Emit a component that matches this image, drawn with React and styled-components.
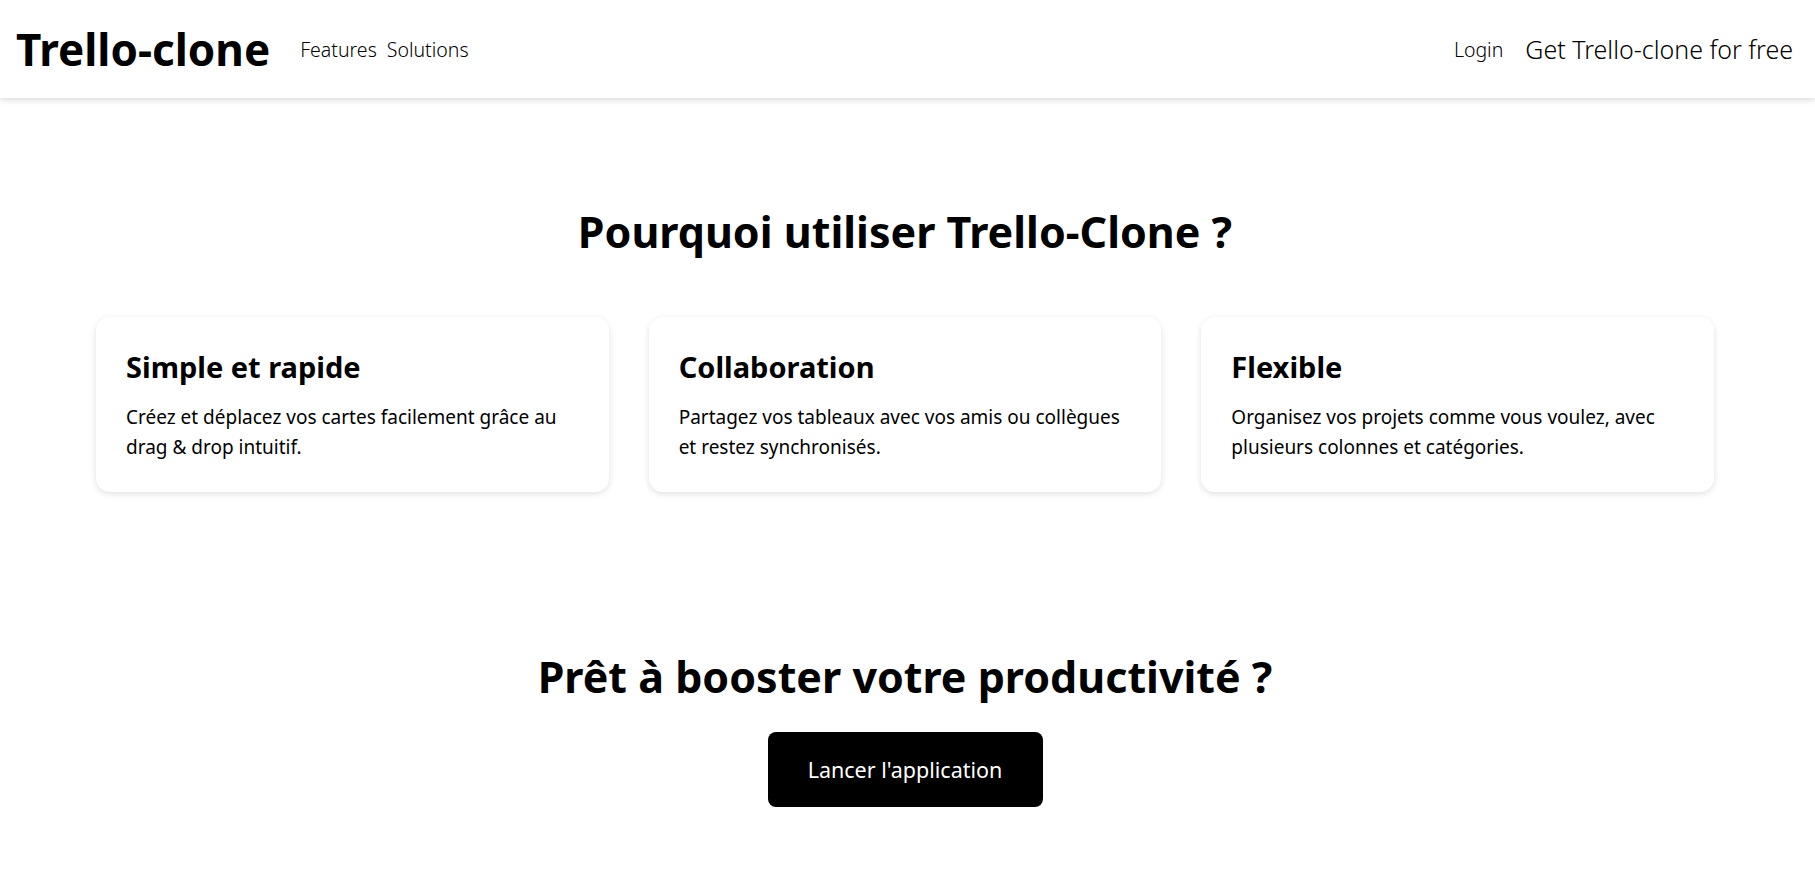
import React from "react";
import styled, { createGlobalStyle } from "styled-components";

const features = [
  {
    title: "Simple et rapide",
    text: "Créez et déplacez vos cartes facilement grâce au drag & drop intuitif.",
  },
  {
    title: "Collaboration",
    text: "Partagez vos tableaux avec vos amis ou collègues et restez synchronisés.",
  },
  {
    title: "Flexible",
    text: "Organisez vos projets comme vous voulez, avec plusieurs colonnes et catégories.",
  },
];

const App = () => (
  <>
    <GlobalStyle />
    <Header>
      <Left>
        <Logo>Trello-clone</Logo>
        <Nav>
          <NavLink>Features</NavLink>
          <NavLink>Solutions</NavLink>
        </Nav>
      </Left>
      <Right>
        <NavLink>Login</NavLink>
        <Cta>Get Trello-clone for free</Cta>
      </Right>
    </Header>

    <Main>
      <Features>
        <Title>Pourquoi utiliser Trello-Clone ?</Title>
        <Grid>
          {features.map((f) => (
            <Card key={f.title}>
              <CardTitle>{f.title}</CardTitle>
              <CardText>{f.text}</CardText>
            </Card>
          ))}
        </Grid>
      </Features>

      <Launch>
        <Title>Prêt à booster votre productivité ?</Title>
        <Button>Lancer l'application</Button>
      </Launch>
    </Main>
  </>
);

const GlobalStyle = createGlobalStyle`
  body {
    margin: 0;
    background: #fff;
    color: #000;
    font-family: "Noto Sans", "DejaVu Sans", sans-serif;
  }
  * {
    box-sizing: border-box;
  }
`;

const Header = styled.header`
  display: flex;
  justify-content: space-between;
  align-items: center;
  height: 98px;
  padding: 0 22px 0 16px;
  background: #fff;
  box-shadow: 0 2px 6px rgba(0, 0, 0, 0.15);
`;

const Left = styled.div`
  display: flex;
  align-items: center;
  gap: 30px;
`;

const Logo = styled.div`
  font-size: 44px;
  font-weight: 700;
`;

const Nav = styled.nav`
  display: flex;
  gap: 10px;
`;

const NavLink = styled.a`
  font-size: 19.5px;
  font-weight: 300;
  cursor: pointer;
`;

const Right = styled.div`
  display: flex;
  align-items: center;
  gap: 22px;
`;

const Cta = styled.a`
  font-size: 25px;
  font-weight: 300;
  cursor: pointer;
`;

const Main = styled.main`
  display: flex;
  flex-direction: column;
  align-items: center;
  padding: 0 101px 0 96px;
`;

const Features = styled.section`
  width: 100%;
  display: flex;
  flex-direction: column;
  align-items: center;
  padding-top: 104px;
`;

const Title = styled.h2`
  margin: 0;
  font-size: 43px;
  font-weight: 700;
  text-align: center;
`;

const Grid = styled.div`
  display: grid;
  grid-template-columns: repeat(3, 1fr);
  gap: 40px;
  width: 100%;
  margin-top: 56px;
`;

const Card = styled.div`
  background: #fff;
  border-radius: 14px;
  padding: 30px 31px 30px 30px;
  box-shadow: 0 2px 6px rgba(0, 0, 0, 0.12);
`;

const CardTitle = styled.h3`
  margin: 0 0 16px;
  font-size: 29px;
  font-weight: 700;
`;

const CardText = styled.p`
  margin: 0;
  font-size: 19px;
  line-height: 30px;
`;

const Launch = styled.section`
  display: flex;
  flex-direction: column;
  align-items: center;
  gap: 26px;
  padding-top: 155px;
`;

const Button = styled.button`
  border: none;
  border-radius: 8px;
  background: #000;
  color: #fff;
  font-family: inherit;
  font-size: 21.5px;
  font-weight: 400;
  width: 275px;
  height: 75px;
  cursor: pointer;
`;

export default App;
